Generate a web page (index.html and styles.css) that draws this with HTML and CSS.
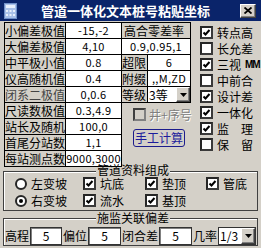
FILE: index.html
```html
<!DOCTYPE html>
<html lang="zh-CN">
<head>
    <meta charset="UTF-8">
    <title>管道一体化文本桩号粘贴坐标</title>
    <link rel="stylesheet" href="styles.css">
</head>
<body>
    <div class="window">
        <div class="titlebar">
            <svg class="app-icon" viewBox="0 0 13 16" width="13" height="16">
                <rect x="0.5" y="0.5" width="12" height="15" fill="#a9c1e9" stroke="#6f8fc8"/>
                <rect x="2" y="2" width="9" height="3" fill="#e8f0fc"/>
                <rect x="2" y="7" width="2" height="2" fill="#e8f0fc"/>
                <rect x="5.5" y="7" width="2" height="2" fill="#e8f0fc"/>
                <rect x="9" y="7" width="2" height="2" fill="#e8f0fc"/>
                <rect x="2" y="11" width="2" height="2" fill="#e8f0fc"/>
                <rect x="5.5" y="11" width="2" height="2" fill="#e8f0fc"/>
                <rect x="9" y="11" width="2" height="2" fill="#e8f0fc"/>
            </svg>
            <span class="title">管道一体化文本桩号粘贴坐标</span>
            <span class="close">
                <svg viewBox="0 0 8 7" width="8" height="7">
                    <path d="M0.5 0.5 L7.5 6.5 M7.5 0.5 L0.5 6.5" stroke="#000" stroke-width="1.8"/>
                </svg>
            </span>
        </div>

        <div class="top">
            <div class="grid">
                <div class="cell label">小偏差极值</div><div class="cell value">-15,-2</div>
                <div class="cell label">大偏差极值</div><div class="cell value">4,10</div>
                <div class="cell label">中平极小值</div><div class="cell value">0.8</div>
                <div class="cell label">仪高随机值</div><div class="cell value">0.4</div>
                <div class="cell label dim">闭系二极值</div><div class="cell value">0,0.6</div>
                <div class="cell label">尺读数极值</div><div class="cell value">0.3,4.9</div>
                <div class="cell label">站长及随机</div><div class="cell value">100,0</div>
                <div class="cell label">首尾分站数</div><div class="cell value">1,1</div>
                <div class="cell label">每站测点数</div><div class="cell value">9000,3000</div>
            </div>

            <div class="mid">
                <div class="mid-grid">
                    <div class="cell label wide">高合零差率</div>
                    <div class="cell value wide">0.9,0.95,1</div>
                    <div class="cell label">超限</div><div class="cell value">6</div>
                    <div class="cell label">附缀</div><div class="cell value">,,M,ZD</div>
                    <div class="cell label">等级</div>
                    <div class="cell combo">
                        <span class="combo-text">3等</span>
                        <span class="drop"><svg viewBox="0 0 7 4" width="7" height="4"><path d="M0 0 H7 L3.5 4 Z" fill="#000"/></svg></span>
                    </div>
                </div>
                <div class="check disabled"><span class="box"></span><span class="etched">井+序号</span></div>
                <button class="calc">手工计算</button>
            </div>

            <div class="checks">
                <div class="check"><span class="box"><svg viewBox="0 0 9 9" width="9" height="9"><path d="M1.5 4.5 L3.5 6.5 L7.5 2" stroke="#000" stroke-width="2" fill="none"/></svg></span>转点高</div>
                <div class="check"><span class="box"></span>长允差</div>
                <div class="check"><span class="box"><svg viewBox="0 0 9 9" width="9" height="9"><path d="M1.5 4.5 L3.5 6.5 L7.5 2" stroke="#000" stroke-width="2" fill="none"/></svg></span>三视<span class="mm">MM</span></div>
                <div class="check"><span class="box"></span>中前合</div>
                <div class="check"><span class="box"><svg viewBox="0 0 9 9" width="9" height="9"><path d="M1.5 4.5 L3.5 6.5 L7.5 2" stroke="#000" stroke-width="2" fill="none"/></svg></span>设计差</div>
                <div class="check"><span class="box"><svg viewBox="0 0 9 9" width="9" height="9"><path d="M1.5 4.5 L3.5 6.5 L7.5 2" stroke="#000" stroke-width="2" fill="none"/></svg></span>一体化</div>
                <div class="check"><span class="box"><svg viewBox="0 0 9 9" width="9" height="9"><path d="M1.5 4.5 L3.5 6.5 L7.5 2" stroke="#000" stroke-width="2" fill="none"/></svg></span>监　理</div>
                <div class="check"><span class="box"></span>保　留</div>
            </div>
        </div>

        <div class="group group-pipe">
            <div class="group-title">管道资料组成</div>
            <div class="options">
                <div class="check"><span class="radio"></span>左变坡</div>
                <div class="check"><span class="box"><svg viewBox="0 0 9 9" width="9" height="9"><path d="M1.5 4.5 L3.5 6.5 L7.5 2" stroke="#000" stroke-width="2" fill="none"/></svg></span>坑底</div>
                <div class="check"><span class="box"><svg viewBox="0 0 9 9" width="9" height="9"><path d="M1.5 4.5 L3.5 6.5 L7.5 2" stroke="#000" stroke-width="2" fill="none"/></svg></span>垫顶</div>
                <div class="check"><span class="box"><svg viewBox="0 0 9 9" width="9" height="9"><path d="M1.5 4.5 L3.5 6.5 L7.5 2" stroke="#000" stroke-width="2" fill="none"/></svg></span>管底</div>
                <div class="check"><span class="radio on"></span>右变坡</div>
                <div class="check"><span class="box"><svg viewBox="0 0 9 9" width="9" height="9"><path d="M1.5 4.5 L3.5 6.5 L7.5 2" stroke="#000" stroke-width="2" fill="none"/></svg></span>流水</div>
                <div class="check"><span class="box"><svg viewBox="0 0 9 9" width="9" height="9"><path d="M1.5 4.5 L3.5 6.5 L7.5 2" stroke="#000" stroke-width="2" fill="none"/></svg></span>基顶</div>
            </div>
        </div>

        <div class="group group-dev">
            <div class="group-title">施监关联偏差</div>
            <div class="fields">
                <span class="field-label">高程</span><span class="input w32">5</span>
                <span class="field-label">偏位</span><span class="input w33">5</span>
                <span class="field-label">闭合差</span><span class="input w33">5</span>
                <span class="field-label">几率</span>
                <span class="select">
                    <span class="combo-text">1/3</span>
                    <span class="drop"><svg viewBox="0 0 7 4" width="7" height="4"><path d="M0 0 H7 L3.5 4 Z" fill="#000"/></svg></span>
                </span>
            </div>
        </div>
    </div>
</body>
</html>
```

FILE: styles.css
```css
* {
    box-sizing: border-box;
}
body {
    margin: 0;
    background: #d4d0c8;
    font-family: "Noto Sans CJK SC", sans-serif;
    font-size: 12px;
    color: #000;
}
.window {
    width: 261px;
    height: 248px;
    overflow: hidden;
}

/* title bar */
.titlebar {
    height: 21px;
    background: #0a246a;
    color: #fff;
    display: flex;
    align-items: center;
}
.app-icon {
    margin-left: 4px;
    flex: none;
}
.title {
    margin-left: 24px;
    font-size: 13px;
    font-weight: bold;
    line-height: 21px;
    white-space: nowrap;
}
.close {
    margin-left: auto;
    margin-right: 5px;
    width: 16px;
    height: 14px;
    background: #d4d0c8;
    border: 1px solid;
    border-color: #fff #404040 #404040 #fff;
    box-shadow: inset -1px -1px 0 #808080;
    display: flex;
    align-items: center;
    justify-content: center;
}

/* upper part */
.top {
    display: flex;
    height: 146px;
    padding: 1px 0 0 4px;
}
.grid {
    display: grid;
    grid-template-columns: 60px 55px;
    grid-auto-rows: 15px;
    gap: 1px;
    background: #000;
    border: 1px solid #000;
    align-self: flex-start;
}
.cell {
    background: #d4d0c8;
    line-height: 15px;
    white-space: nowrap;
    overflow: hidden;
}
.cell.value {
    background: #fff;
    text-align: center;
    font-size: 11px;
    letter-spacing: 0.3px;
}
.cell.dim {
    color: #444;
}
.cell.wide {
    grid-column: span 2;
}
.mid {
    width: 69px;
    display: flex;
    flex-direction: column;
}
.mid-grid {
    display: grid;
    grid-template-columns: 25px 42px;
    grid-auto-rows: 15px;
    gap: 1px;
    background: #000;
    border: 1px solid #000;
    border-left: none;
}
.mid-grid .label.wide {
    padding-left: 2px;
}
.combo, .select {
    display: flex;
    background: #fff;
}
.combo-text {
    flex: 1;
    padding-left: 1px;
    line-height: 15px;
}
.drop {
    width: 14px;
    flex: none;
    background: #d4d0c8;
    border: 1px solid;
    border-color: #fff #404040 #404040 #fff;
    box-shadow: inset -1px -1px 0 #808080;
    display: flex;
    align-items: center;
    justify-content: center;
}

/* checkboxes */
.check {
    display: flex;
    align-items: center;
    gap: 4px;
    height: 16px;
    white-space: nowrap;
}
.box {
    width: 13px;
    height: 13px;
    flex: none;
    background: #fff;
    border: 2px solid;
    border-color: #262626 #3a3a3a #3a3a3a #262626;
    display: flex;
}
.radio {
    width: 12px;
    height: 12px;
    flex: none;
    border-radius: 50%;
    background: #fff;
    border: 2px solid #262626;
    display: flex;
    align-items: center;
    justify-content: center;
}
.radio.on::after {
    content: "";
    width: 4px;
    height: 4px;
    border-radius: 50%;
    background: #000;
}
.check.disabled {
    margin: 4px 0 0 11px;
    height: 14px;
    gap: 3px;
}
.check.disabled .box {
    background: #d4d0c8;
    border-color: #404040 #808080 #808080 #404040;
}
.etched {
    color: #808080;
    text-shadow: 1px 1px 0 #fff;
}
.calc {
    margin: 8px 0 0 11px;
    width: 52px;
    height: 18px;
    padding: 0;
    background: #d4d0c8;
    border: 1px solid #1c1c8c;
    border-radius: 3px;
    color: #1c1c9c;
    font-family: inherit;
    font-size: 12px;
    line-height: 16px;
}
.checks {
    padding: 2px 0 0 9px;
}
.mm {
    font-family: "Liberation Sans", sans-serif;
    font-size: 10px;
    font-weight: bold;
    letter-spacing: -1px;
}

/* group boxes */
.group {
    margin-left: 3px;
    width: 255px;
    border: 1px solid #404040;
    box-shadow: inset 1px 1px 0 #fff;
}
.group-title {
    width: fit-content;
    margin: -8px 0 -1px 92px;
    padding: 0 1px;
    line-height: 12px;
    background: #d4d0c8;
}
.group-pipe {
    margin-top: 4px;
    padding-bottom: 1px;
}
.options {
    display: grid;
    grid-template-columns: 68px 62px 61px auto;
    grid-auto-rows: 17px;
    padding-left: 11px;
}
.options .check {
    height: 13px;
    align-self: center;
}
.group-dev {
    margin-top: 7px;
}
.group-dev .group-title {
    margin-top: -7px;
    margin-bottom: 3px;
}
.fields {
    display: flex;
    align-items: center;
    height: 18px;
}
.field-label {
    padding: 0 1px;
    line-height: 18px;
}
.input {
    height: 18px;
    background: #fff;
    border: 1px solid #333;
    box-shadow: inset 1px 1px 0 #808080;
    text-align: center;
    line-height: 16px;
}
.w32 {
    width: 32px;
}
.w33 {
    width: 33px;
}
.select {
    width: 38px;
    height: 18px;
    border: 1px solid #333;
}
.select .combo-text {
    line-height: 16px;
}
```
